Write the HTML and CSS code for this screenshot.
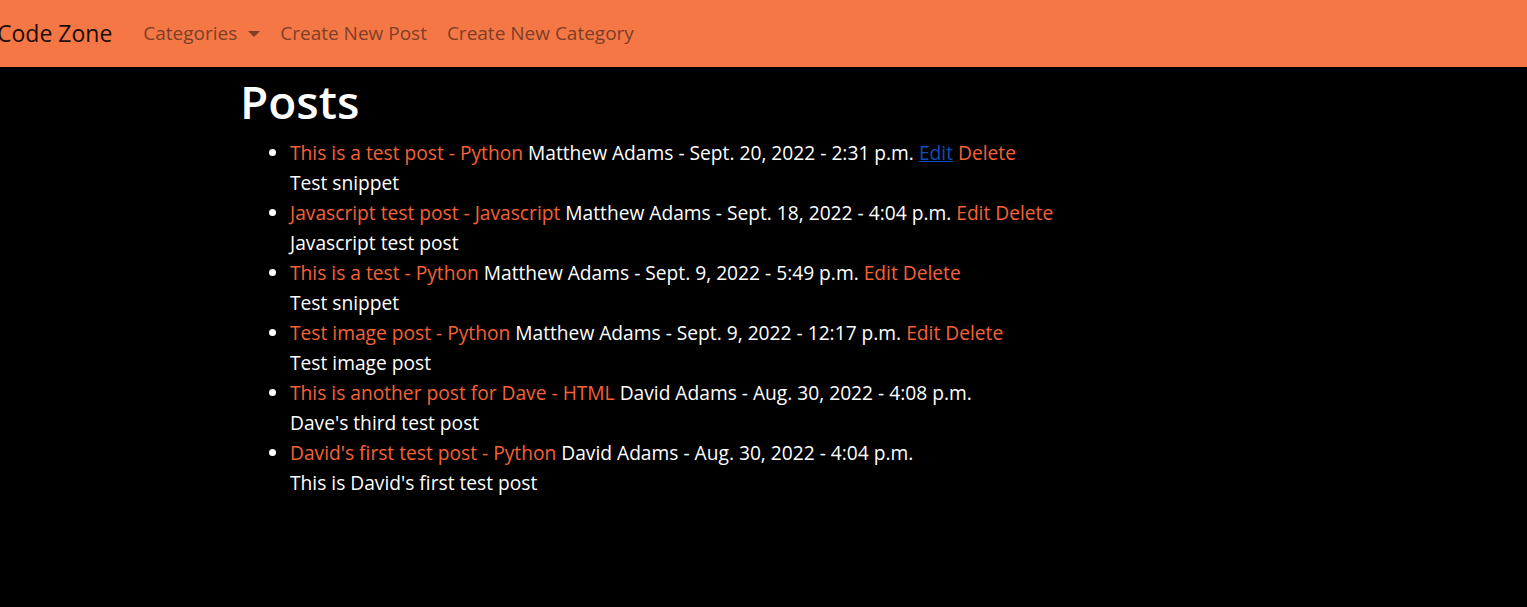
FILE: index.html
```html
<!DOCTYPE html>
<html lang="en">
<head>
<meta charset="utf-8">
<title>Code Zone</title>
<link rel="stylesheet" href="styles.css">
</head>
<body>
<nav class="navbar">
  <a class="brand" href="#">Code Zone</a>
  <ul class="nav">
    <li><a class="nav-link dropdown" href="#">Categories <span class="caret"></span></a></li>
    <li><a class="nav-link" href="#">Create New Post</a></li>
    <li><a class="nav-link" href="#">Create New Category</a></li>
  </ul>
</nav>
<main class="content">
  <h1 class="title">Posts</h1>
  <ul class="posts">
    <li><a class="lnk" href="#">This is a test post</a> - <a class="lnk" href="#">Python</a> <span class="meta">Matthew Adams - Sept. 20, 2022 - 2:31 p.m.</span> <a class="edit-visited" href="#">Edit</a> <a class="lnk" href="#">Delete</a><br><span class="meta">Test snippet</span></li>
    <li><a class="lnk" href="#">Javascript test post</a> - <a class="lnk" href="#">Javascript</a> <span class="meta">Matthew Adams - Sept. 18, 2022 - 4:04 p.m.</span> <a class="lnk" href="#">Edit</a> <a class="lnk" href="#">Delete</a><br><span class="meta">Javascript test post</span></li>
    <li><a class="lnk" href="#">This is a test</a> - <a class="lnk" href="#">Python</a> <span class="meta">Matthew Adams - Sept. 9, 2022 - 5:49 p.m.</span> <a class="lnk" href="#">Edit</a> <a class="lnk" href="#">Delete</a><br><span class="meta">Test snippet</span></li>
    <li><a class="lnk" href="#">Test image post</a> - <a class="lnk" href="#">Python</a> <span class="meta">Matthew Adams - Sept. 9, 2022 - 12:17 p.m.</span> <a class="lnk" href="#">Edit</a> <a class="lnk" href="#">Delete</a><br><span class="meta">Test image post</span></li>
    <li><a class="lnk" href="#">This is another post for Dave</a> - <a class="lnk" href="#">HTML</a> <span class="meta">David Adams - Aug. 30, 2022 - 4:08 p.m.</span><br><span class="meta">Dave's third test post</span></li>
    <li><a class="lnk" href="#">David's first test post</a> - <a class="lnk" href="#">Python</a> <span class="meta">David Adams - Aug. 30, 2022 - 4:04 p.m.</span><br><span class="meta">This is David's first test post</span></li>
  </ul>
</main>
</body>
</html>
```
FILE: styles.css
```css
html, body {
  margin: 0;
  padding: 0;
  background: #000;
  font-family: "Open Sans", "Noto Sans", sans-serif;
}
.navbar {
  height: 67px;
  background: #f57745;
  display: flex;
  align-items: center;
  overflow: hidden;
}
.brand {
  color: #1a0d08;
  text-decoration: none;
  font-size: 23px;
  line-height: 30px;
  margin-top: -2px;
  margin-left: -3px;
  margin-right: 31px;
}
.nav {
  display: flex;
  list-style: none;
  margin: -2px 0 0 0;
  padding: 0;
  gap: 20px;
}
.nav-link {
  color: #7d3f28;
  text-decoration: none;
  font-size: 19px;
}
.caret {
  display: inline-block;
  width: 0;
  height: 0;
  margin-left: 6px;
  vertical-align: 3px;
  border-left: 6px solid transparent;
  border-right: 6px solid transparent;
  border-top: 6px solid #7d3f28;
}
.content {
  padding-left: 240px;
}
.title {
  margin: 4px 0 7px 0;
  font-size: 46px;
  font-weight: 600;
  line-height: 60px;
  color: #fff;
}
.posts {
  margin: 0;
  padding-left: 50px;
  font-size: 19.2px;
  line-height: 30px;
  color: #f56236;
}
.posts li::marker {
  color: #fff;
}
.lnk {
  color: #f56236;
  text-decoration: none;
}
.meta {
  color: #fff;
}
.edit-visited {
  color: #0c4fb8;
  text-decoration: underline;
}
```
